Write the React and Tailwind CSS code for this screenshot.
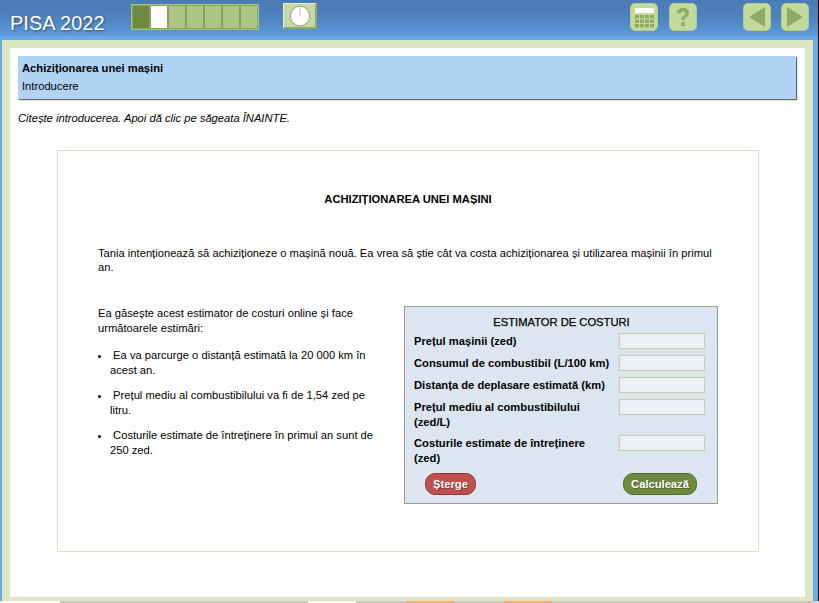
import React from 'react';

// progress cells in the top bar
const CELLS = ['done', 'current', 'todo', 'todo', 'todo', 'todo', 'todo'];

const IconButton = ({ children, className = '' }) => (
    <button className={`w-[28px] h-[28px] rounded-[5px] bg-[#c3da9f] border border-[#b3cc8c] flex items-center justify-center ${className}`}>
        {children}
    </button>
);

const ROWS = [
    { label: 'Prețul mașinii (zed)', h: 'h-[22px]' },
    { label: 'Consumul de combustibil (L/100 km)', h: 'h-[22px]' },
    { label: 'Distanța de deplasare estimată (km)', h: 'h-[22px]' },
    { label: 'Prețul mediu al combustibilului (zed/L)', h: 'h-[36px]' },
    { label: 'Costurile estimate de întreținere (zed)', h: 'h-[36px]' },
];

const BULLETS = [
    'Ea va parcurge o distanță estimată la 20 000 km în acest an.',
    'Prețul mediu al combustibilului va fi de 1,54 zed pe litru.',
    'Costurile estimate de întreținere în primul an sunt de 250 zed.',
];

const App = () => {
    return (
        <div className="w-[819px] h-[603px] overflow-hidden flex flex-col bg-[#cccccc] text-[11.2px] text-black font-['Liberation_Sans',Arial,sans-serif]">
            <div className="h-[601px] flex shrink-0">
                <div className="w-[818px] flex flex-col">

                    {/* HEADER */}
                    <header className="h-[40px] shrink-0 bg-gradient-to-b from-[#4a79b6] via-[#4f82bf] to-[#5b9be0] border-b-[4px] border-[#66ace9] flex items-start">
                        <div className="ml-[10px] mt-[12px] w-[121px] text-[20px] leading-[23px] text-white [text-shadow:1px_1px_2px_#2f4d73]">PISA 2022</div>
                        <div className="mt-[4px] w-[128px] h-[26px] flex bg-[#a9c17c] border border-[#a9c17c]">
                            {CELLS.map((c, i) => (
                                <div
                                    key={i}
                                    className={`w-[18px] border border-[#87a35a] ${c === 'done' ? 'bg-[#6d8a3f]' : c === 'current' ? 'bg-white' : 'bg-[#adc585]'}`}
                                ></div>
                            ))}
                        </div>
                        <div className="mt-[3px] ml-[24px] w-[34px] h-[26px] bg-[#c5d9a3] border-t border-l border-[#e4eed4] border-b-2 border-r-2 border-b-[#8fa868] border-r-[#8fa868] flex items-center justify-center">
                            <svg width="22" height="22" viewBox="0 0 22 22">
                                <circle cx="11" cy="11" r="9.8" fill="#ffffff" stroke="#a3ad90" strokeWidth="1.2" />
                                <path d="M11 1.5V11" stroke="#b8bfa8" strokeWidth="1" />
                            </svg>
                        </div>
                        <div className="ml-auto mt-[3px] flex">
                            <IconButton>
                                <svg width="24" height="24" viewBox="0 0 24 24">
                                    <rect x="3" y="3" width="19" height="5" fill="#ffffff" />
                                    {[0, 1, 2, 3].map((col) =>
                                        [0, 1, 2].map((row) => (
                                            <rect key={`${col}${row}`} x={3 + col * 5} y={10 + row * 4.5} width="4" height="3.4" fill="#8fab62" />
                                        ))
                                    )}
                                </svg>
                            </IconButton>
                            <IconButton className="ml-[11px]">
                                <svg width="22" height="24" viewBox="0 0 22 24">
                                    <path d="M5 8c0-3 2.6-5 6-5s6 2 6 5c0 2.4-1.4 3.500-3 4.600-1 .7-1.300 1.200-1.300 2.400H9.300c0-2.200.7-3.300 2.100-4.300 1.200-.8 1.900-1.400 1.900-2.500 0-1-.9-1.700-2.300-1.700-1.500 0-2.300.8-2.400 1.900z" fill="#8fab62" />
                                    <rect x="9.300" y="17" width="3.500" height="4" fill="#8fab62" />
                                </svg>
                            </IconButton>
                            <IconButton className="ml-[46px]">
                                <svg width="20" height="22" viewBox="0 0 20 22"><path d="M2 11 18 1v20z" fill="#8fab62" /></svg>
                            </IconButton>
                            <IconButton className="ml-[10px] mr-[9px]">
                                <svg width="20" height="22" viewBox="0 0 20 22"><path d="M18 11 2 1v20z" fill="#8fab62" /></svg>
                            </IconButton>
                        </div>
                    </header>

                    {/* FRAME */}
                    <div className="flex-1 bg-[#66ace9] pl-[2px] pr-[5px] flex">
                        <div className="flex-1 bg-[#dce6c1] pt-[8px] pb-[4px] pl-[8px] pr-[8px] flex">
                            <main className="flex-1 bg-white px-[8px] pt-[8px]">
                                <div className="h-[43px] mr-[1px] bg-[#b1d3f3] shadow-[1px_1px_1px_#666666] pl-[4px] pt-[5px]">
                                    <div className="font-bold leading-[14px]">Achiziționarea unei mașini</div>
                                    <div className="mt-[4px] leading-[14px]">Introducere</div>
                                </div>
                                <div className="mt-[12px] leading-[14px] italic">Citește introducerea. Apoi dă clic pe săgeata ÎNAINTE.</div>

                                {/* CONTENT BOX */}
                                <div className="mt-[25px] ml-[39px] w-[702px] h-[402px] border border-[#dde3bd] pl-[40px] pr-[39px] pt-[41px]">
                                    <h1 className="text-center font-bold leading-[14px] pr-[1px]">ACHIZIȚIONAREA UNEI MAȘINI</h1>
                                    <p className="mt-[40px] leading-[14px]">
                                        Tania intenționează să achiziționeze o mașină nouă. Ea vrea să știe cât va costa achiziționarea și utilizarea mașinii în primul an.
                                    </p>
                                    <div className="mt-[32px] flex items-start">
                                        <div className="w-[280px] leading-[15px]">
                                            <p>Ea găsește acest estimator de costuri online și face următoarele estimări:</p>
                                            <ul className="mt-[12px] list-disc pl-[12px] marker:text-[9px]">
                                                {BULLETS.map((b) => (
                                                    <li key={b} className="mb-[10px]">&nbsp;{b}</li>
                                                ))}
                                            </ul>
                                        </div>

                                        {/* ESTIMATOR */}
                                        <div className="ml-[26px] w-[314px] h-[198px] bg-[#dce6f2] border border-[#999999] pl-[9px] pr-[11px] pt-[8px]">
                                            <div className="text-center leading-[14px] pl-[3px] [-webkit-text-stroke:0.25px_#000]">ESTIMATOR DE COSTURI</div>
                                            <div className="mt-[3px]">
                                                {ROWS.map((r) => (
                                                    <div key={r.label} className={`flex items-start justify-between ${r.h}`}>
                                                        <label className="w-[200px] font-bold leading-[15px] pt-[2px]">{r.label}</label>
                                                        <input className="w-[88px] h-[18px] bg-[#edf0f6] border border-[#dde6bf] shadow-[inset_0_0_0_1px_#c4cad2]" />
                                                    </div>
                                                ))}
                                            </div>
                                            <div className="mt-[3px] flex justify-between pl-[11px] pr-[9px]">
                                                <button className="w-[51px] h-[22px] rounded-[10px] bg-[#c0504d] border border-[#8f3b39] text-white font-bold [text-shadow:1px_1px_1px_#7a3533]">Șterge</button>
                                                <button className="w-[74px] h-[22px] rounded-[10px] bg-[#6d8a3f] border border-[#56702f] text-white font-bold [text-shadow:1px_1px_1px_#4a6028]">Calculează</button>
                                            </div>
                                        </div>
                                    </div>
                                </div>
                            </main>
                        </div>
                    </div>
                </div>
                <div className="w-[1px] bg-black"></div>
            </div>

            {/* BOTTOM TABS */}
            <div className="h-[2px] flex bg-[#cccccc]">
                <div className="w-[60px] bg-white"></div>
                <div className="ml-[248px] w-[48px] bg-[#f6f6f6]"></div>
                <div className="ml-[50px] w-[48px] bg-[#f9ae6f]"></div>
                <div className="ml-[50px] w-[48px] bg-[#f9ae6f]"></div>
            </div>
        </div>
    );
};

export default App;
